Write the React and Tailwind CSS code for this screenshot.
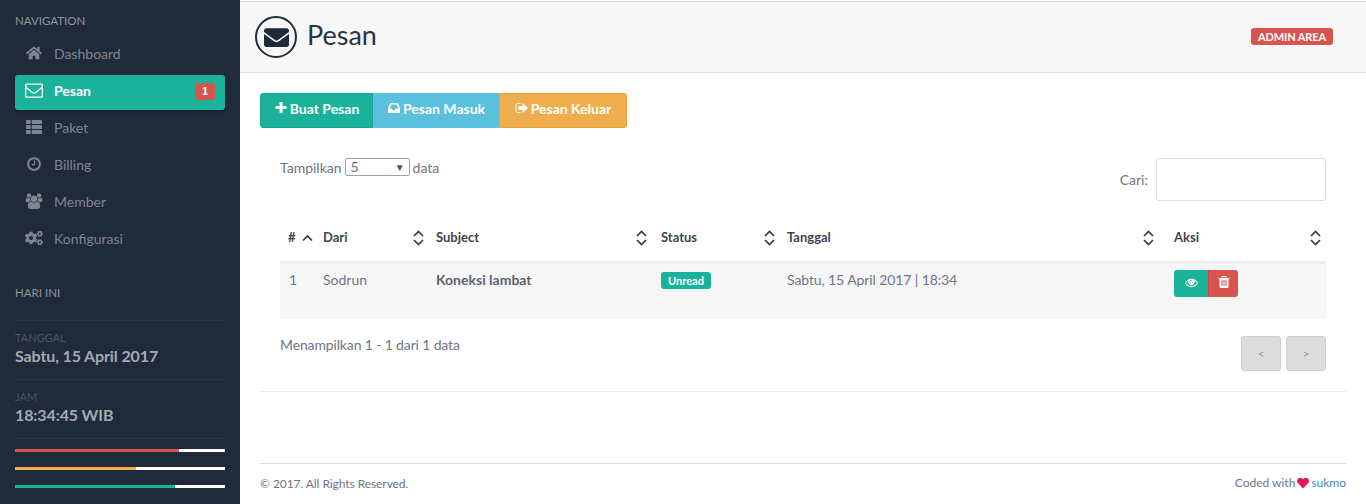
import { FaHome, FaThList, FaCogs, FaEnvelope, FaHeart } from 'react-icons/fa'

// Old-style solid glyphs, the icon package doesn't have these shapes
const glyphs = {
    envelope: 'M1664 1504v-768q-32 36-69 66-268 206-426 338-51 43-83 67t-86.5 48.5-102.5 24.5h-2q-48 0-102.5-24.5t-86.5-48.5-83-67q-158-132-426-338-37-30-69-66v768q0 13 9.5 22.5t22.5 9.5h1472q13 0 22.5-9.5t9.5-22.5zm0-1051v-24.5l-.5-13-3-12.5-5.5-9-9-7.5-14-2.5h-1472q-13 0-22.5 9.5t-9.5 22.5q0 168 147 284 193 152 401 317 6 5 35 29.5t46 37.5 44.5 31.5 50.5 27.5 43 9h2q20 0 43-9t50.5-27.5 44.5-31.5 46-37.5 35-29.5q208-165 401-317 54-43 100.5-115.5t46.5-131.5zm128-37v1088q0 66-47 113t-113 47h-1472q-66 0-113-47t-47-113v-1088q0-66 47-113t113-47h1472q66 0 113 47t47 113z',
    clock: 'M1024 544v448q0 14-9 23t-23 9h-320q-14 0-23-9t-9-23v-64q0-14 9-23t23-9h224v-352q0-14 9-23t23-9h64q14 0 23 9t9 23zm416 352q0-148-73-273t-198-198-273-73-273 73-198 198-73 273 73 273 198 198 273 73 273-73 198-198 73-273zm224 0q0 209-103 385.5t-279.5 279.5-385.5 103-385.5-103-279.5-279.5-103-385.5 103-385.5 279.5-279.5 385.5-103 385.5 103 279.5 279.5 103 385.5z',
    inbox: 'M1151 960h316q-1-3-2.5-8.5t-2.5-7.5l-212-496h-708l-212 496q-1 3-2.5 8.5t-2.5 7.5h316l95 192h320zm513 30v482q0 26-19 45t-45 19h-1408q-26 0-45-19t-19-45v-482q0-62 25-123l238-552q10-25 36.5-42t52.5-17h832q26 0 52.5 17t36.5 42l238 552q25 61 25 123z',
    plus: 'M1600 736v192q0 40-28 68t-68 28h-416v416q0 40-28 68t-68 28h-192q-40 0-68-28t-28-68v-416h-416q-40 0-68-28t-28-68v-192q0-40 28-68t68-28h416v-416q0-40 28-68t68-28h192q40 0 68 28t28 68v416h416q40 0 68 28t28 68z',
    signout: 'M704 1440q0 4 1 20t.5 26.5-3 23.5-10 19.5-20.5 6.5h-320q-119 0-203.5-84.5t-84.5-203.5v-704q0-119 84.5-203.5t203.5-84.5h320q13 0 22.5 9.5t9.5 22.5q0 4 1 20t.5 26.5-3 23.5-10 19.5-20.5 6.5h-320q-66 0-113 47t-47 113v704q0 66 47 113t113 47h312l11.5 1 11.5 3 8 5.5 7 9 2 13.5zm928-544q0 26-19 45l-544 544q-19 19-45 19t-45-19-19-45v-288h-448q-26 0-45-19t-19-45v-384q0-26 19-45t45-19h448v-288q0-26 19-45t45-19 45 19l544 544q19 19 19 45z',
    eye: 'M1664 960q-152-236-381-353 61 104 61 225 0 185-131.5 316.5t-316.5 131.5-316.5-131.5-131.5-316.5q0-121 61-225-229 117-381 353 133 205 333.5 326.5t434.5 121.5 434.5-121.5 333.5-326.5zm-720-384q0-20-14-34t-34-14q-125 0-214.5 89.5t-89.5 214.5q0 20 14 34t34 14 34-14 14-34q0-86 61-147t147-61q20 0 34-14t14-34zm848 384q0 34-20 69-140 230-376.5 368.5t-499.5 138.5-499.5-139-376.5-368q-20-35-20-69t20-69q140-229 376.5-368t499.5-139 499.5 139 376.5 368q20 35 20 69z',
    trash: 'M704 1376v-704q0-14-9-23t-23-9h-64q-14 0-23 9t-9 23v704q0 14 9 23t23 9h64q14 0 23-9t9-23zm256 0v-704q0-14-9-23t-23-9h-64q-14 0-23 9t-9 23v704q0 14 9 23t23 9h64q14 0 23-9t9-23zm256 0v-704q0-14-9-23t-23-9h-64q-14 0-23 9t-9 23v704q0 14 9 23t23 9h64q14 0 23-9t9-23zm-544-992h448l-48-117q-7-9-17-11h-317q-10 2-17 11zm928 32v64q0 14-9 23t-23 9h-96v948q0 83-47 143.5t-113 60.5h-832q-66 0-113-58.5t-47-141.5v-952h-96q-14 0-23-9t-9-23v-64q0-14 9-23t23-9h309l70-167q15-37 54-63t79-26h320q40 0 79 26t54 63l70 167h309q14 0 23 9t9 23z',
    users: 'M657 896q-162 5-265 128h-134q-82 0-138-40.5t-56-118.5q0-353 124-353 6 0 43.5 21t97.5 42.5 119 21.5q67 0 133-23-5 37-5 66 0 139 81 256zm1071 637q0 120-73 189.5t-194 69.5h-874q-121 0-194-69.5t-73-189.5q0-53 3.5-103.5t14-109 26.5-108.5 43-97.5 62-81 85.5-53.5 111.5-20q10 0 43 21.5t73 48 107 48 135 21.5 135-21.5 107-48 73-48 43-21.5q61 0 111.5 20t85.5 53.5 62 81 43 97.5 26.5 108.5 14 109 3.5 103.5zm-1024-1277q0 106-75 181t-181 75-181-75-75-181 75-181 181-75 181 75 75 181zm704 384q0 159-112.5 271.5t-271.5 112.5-271.5-112.5-112.5-271.5 112.5-271.5 271.5-112.5 271.5 112.5 112.5 271.5zm576 225q0 78-56 118.5t-138 40.5h-134q-103-123-265-128 81-117 81-256 0-29-5-66 66 23 133 23 59 0 119-21.5t97.5-42.5 43.5-21q124 0 124 353zm-128-609q0 106-75 181t-181 75-181-75-75-181 75-181 181-75 181 75 75 181z',
}

function Glyph({ name, size, wide }) {
    return (
        <svg width={size} height={size} viewBox={wide ? '0 0 2048 1792' : '0 0 1792 1792'} fill="currentColor" className="shrink-0">
            <path d={glyphs[name]} />
        </svg>
    )
}

const navItems = [
    { label: 'Dashboard', icon: <FaHome size={16} /> },
    { label: 'Pesan', icon: <Glyph name="envelope" size={18} />, active: true },
    { label: 'Paket', icon: <FaThList size={16} /> },
    { label: 'Billing', icon: <Glyph name="clock" size={16} /> },
    { label: 'Member', icon: <Glyph name="users" size={18} wide /> },
    { label: 'Konfigurasi', icon: <FaCogs size={18} /> },
]

const columns = [
    { label: '#', width: 'w-[35px]', pad: 'pr-[2px]', up: true },
    { label: 'Dari', width: 'w-[113px]', pad: 'pr-[4px]' },
    { label: 'Subject', width: 'w-[225px]', pad: 'pr-[6px]' },
    { label: 'Status', width: 'w-[126px]', pad: 'pr-[4px]' },
    { label: 'Tanggal', width: 'w-[387px]', pad: 'pr-[12px]' },
    { label: 'Aksi', width: 'w-[160px]', pad: 'pr-[5px]' },
]

// Sort arrows in the table header
function SortIcon({ up }) {
    return (
        <svg width="11" height="16" viewBox="0 0 11 16" fill="none" stroke="#333d47" strokeWidth="1.7" className="shrink-0">
            {up ? (
                <path d="M1 10.5 L5.5 6 L10 10.5" />
            ) : (
                <>
                    <path d="M1 6 L5.5 1.5 L10 6" />
                    <path d="M1 10 L5.5 14.5 L10 10" />
                </>
            )}
        </svg>
    )
}

function Sidebar() {
    return (
        <aside className="w-[240px] h-[504px] shrink-0 bg-[#1f2a3a] px-[15px] pt-[15px] text-[#8a909a]">
            <div className="text-[11.5px] leading-[12px] h-[23px] text-[#90959d]">NAVIGATION</div>
            <nav className="flex flex-col gap-[2px]">
                {navItems.map(item => (
                    <div
                        key={item.label}
                        className={`flex items-center h-[35px] pb-[5px] rounded-[3px] text-[14px] ${item.active ? 'bg-[#1ab29a] text-white font-bold shadow-[0_2px_2px_rgba(0,0,0,0.25)]' : 'text-[#7f8590]'}`}
                    >
                        <span className="w-[19px] ml-[9px] mr-[11px] flex justify-center">{item.icon}</span>
                        <span>{item.label}</span>
                        {item.active && (
                            <span className="ml-auto mr-[10px] mt-[3px] w-[20px] h-[17px] rounded-[3px] bg-[#d9534f] text-[11px] leading-[17px] text-center font-['Liberation_Sans'] font-bold">1</span>
                        )}
                    </div>
                ))}
            </nav>

            <div className="mt-[29px] text-[11.5px] leading-[12px] text-[#90959d]">HARI INI</div>
            <div className="mt-[21px] border-t border-[#283445] h-[59px] pt-[11px]">
                <div className="text-[11px] leading-[12px] text-[#4a5361]">TANGGAL</div>
                <div className="text-[16px] leading-[24px] font-bold tracking-[-0.12px] text-[#a4a9b1]">Sabtu, 15 April 2017</div>
            </div>
            <div className="border-t border-[#283445] h-[59px] pt-[11px]">
                <div className="text-[11px] leading-[12px] text-[#4a5361]">JAM</div>
                <div className="text-[16px] leading-[24px] font-bold tracking-[-0.12px] text-[#a4a9b1]">18:34:45 WIB</div>
            </div>
            <div className="border-t border-[#283445] pt-[10px] flex flex-col gap-[15px]">
                <div className="h-[3px] bg-white"><div className="h-full w-[78%] bg-[#d9534f]" /></div>
                <div className="h-[3px] bg-white"><div className="h-full w-[57.6%] bg-[#f0ad4e]" /></div>
                <div className="h-[3px] bg-white"><div className="h-full w-[76%] bg-[#1ab29a]" /></div>
            </div>
        </aside>
    )
}

function Header() {
    return (
        <header className="h-[72px] mt-px bg-[#f7f7f7] border-t border-b border-[#dcdde1] flex items-center pl-[15px] pr-[33px]">
            <span className="w-[42px] h-[42px] rounded-full border-2 border-[#1f2a3a] flex items-center justify-center text-[25px] text-[#1f2a3a]">
                <FaEnvelope />
            </span>
            <h1 className="ml-[10px] pb-[4px] text-[27px] leading-[36px] text-[#2a3442]">Pesan</h1>
            <span className="ml-auto mb-[2px] h-[17px] px-[7px] rounded-[3px] bg-[#d9534f] text-white text-[11px] leading-[17px] font-bold tracking-[-0.1px]">ADMIN AREA</span>
        </header>
    )
}

function Toolbar() {
    return (
        <div className="flex text-[14px] font-bold text-white h-[35px]">
            <div className="w-[113px] pb-[5px] flex items-center justify-center gap-[2px] rounded-l-[3px] bg-[#1ab29a] border border-[#18a68f]"><Glyph name="plus" size={14} />Buat Pesan</div>
            <div className="w-[126px] pb-[5px] flex items-center justify-center gap-[2px] bg-[#5bc0de] border border-[#5bc0de]"><Glyph name="inbox" size={14} />Pesan Masuk</div>
            <div className="w-[128px] pb-[5px] flex items-center justify-center gap-[2px] rounded-r-[3px] bg-[#f0ad4e] border border-[#eea236]"><Glyph name="signout" size={14} />Pesan Keluar</div>
        </div>
    )
}

function DataTable() {
    return (
        <table className="mt-[14px] w-[1046px] table-fixed border-collapse text-[14px]">
            <thead>
                <tr className="h-[47px] border-b-[3px] border-[#eeeeee]">
                    {columns.map(col => (
                        <th key={col.label} className={`${col.width} ${col.pad} pl-[8px] text-left font-bold text-[13px] text-[#3d4650]`}>
                            <div className="flex items-center justify-between">
                                <span>{col.label}</span>
                                <SortIcon up={col.up} />
                            </div>
                        </th>
                    ))}
                </tr>
            </thead>
            <tbody>
                <tr className="h-[57px] bg-[#f6f6f6] align-top text-[#6d7682]">
                    <td className="pl-[9px] pt-[5px]">1</td>
                    <td className="pl-[8px] pt-[5px]">Sodrun</td>
                    <td className="pl-[8px] pt-[5px] font-bold text-[#5b636e]">Koneksi lambat</td>
                    <td className="pl-[8px] pt-[8px]">
                        <span className="block w-[50px] h-[17px] rounded-[3px] bg-[#1ab29a] text-white text-[11px] leading-[17px] text-center font-bold">Unread</span>
                    </td>
                    <td className="pl-[8px] pt-[5px] tracking-[-0.1px]">Sabtu, 15 April 2017 | 18:34</td>
                    <td className="pl-[8px] pt-[6px]">
                        <div className="flex h-[27px] w-[64px] text-white">
                            <span className="w-[34px] pb-[2px] flex items-center justify-center rounded-l-[3px] bg-[#1ab29a]"><Glyph name="eye" size={13} /></span>
                            <span className="w-[30px] pb-[2px] flex items-center justify-center rounded-r-[3px] bg-[#d9534f] border-l border-[#c9433f]"><Glyph name="trash" size={14} /></span>
                        </div>
                    </td>
                </tr>
            </tbody>
        </table>
    )
}

export default function App() {
    return (
        <div className="flex w-[1366px] h-[504px] overflow-hidden bg-white font-['Lato',sans-serif]">
            <Sidebar />
            <main className="flex-1 flex flex-col">
                <Header />
                <div className="mx-[20px] pt-[20px] flex-1 flex flex-col">
                    <Toolbar />
                    <div className="mx-[20px] flex-1 text-[14px] text-[#6d7682]">
                        <div className="mt-[30px] flex items-start justify-between h-[43px]">
                            <div className="flex items-center h-[18px]">
                                Tampilkan
                                <span className="mx-[3px] w-[65px] h-[18px] border border-[#a0a0a0] rounded-[2px] flex items-center justify-between pl-[5px] pr-[4px] leading-none">
                                    5
                                    <span className="text-[10px] text-[#555]">▼</span>
                                </span>
                                data
                            </div>
                            <div className="flex items-center">
                                Cari:
                                <span className="ml-[8px] w-[170px] h-[43px] border border-[#dedede] rounded-[3px] bg-white" />
                            </div>
                        </div>
                        <DataTable />
                        <div className="mt-[16px] flex justify-between">
                            <div className="leading-[20px] tracking-[-0.14px]">Menampilkan 1 - 1 dari 1 data</div>
                            <div className="mt-px flex gap-[5px]">
                                <span className="w-[40px] h-[35px] flex items-center justify-center rounded-[3px] bg-[#dcdcdc] border border-[#cfcfcf] text-[12px] text-[#9a9a9a]">&lt;</span>
                                <span className="w-[40px] h-[35px] flex items-center justify-center rounded-[3px] bg-[#dcdcdc] border border-[#cfcfcf] text-[12px] text-[#9a9a9a]">&gt;</span>
                            </div>
                        </div>
                    </div>
                    <div className="border-t border-[#eeeeee] h-[72px]" />
                    <footer className="border-t border-[#dcdcdc] h-[41px] pt-[11px] flex justify-between text-[12px] text-[#6d7682]">
                        <span className="tracking-[-0.07px]">© 2017. All Rights Reserved.</span>
                        <span className="flex items-center h-[16px]">
                            Coded with
                            <FaHeart className="mx-[2px] text-[12px] text-[#e8175d]" />
                            <span className="text-[#428bca]">sukmo</span>
                        </span>
                    </footer>
                </div>
            </main>
        </div>
    )
}
